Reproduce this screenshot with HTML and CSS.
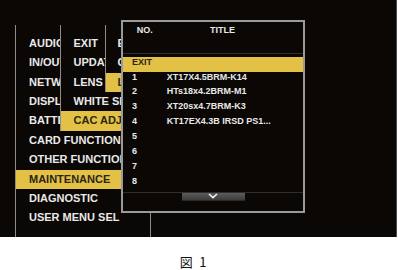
FILE: index.html
```html
<!DOCTYPE html>
<html lang="ja">
<head>
<meta charset="utf-8">
<title>MAINTENANCE - CAC ADJ - LOAD</title>
<link rel="stylesheet" href="styles.css">
</head>
<body>
<div class="figure">
  <div class="screen">
    <ul class="menu menu-main">
      <li>AUDIO</li>
      <li>IN/OUT</li>
      <li>NETWORK</li>
      <li>DISPLAY</li>
      <li>BATTERY</li>
      <li>CARD FUNCTIONS</li>
      <li>OTHER FUNCTIONS</li>
      <li class="sel">MAINTENANCE</li>
      <li>DIAGNOSTIC</li>
      <li>USER MENU SEL</li>
    </ul>
    <ul class="menu menu-sub">
      <li>EXIT</li>
      <li>UPDATE</li>
      <li>LENS FILE</li>
      <li>WHITE SHADING</li>
      <li class="sel">CAC ADJ</li>
    </ul>
    <ul class="menu menu-sub2">
      <li>EXIT</li>
      <li>CAC FILE</li>
      <li class="sel">LOAD</li>
    </ul>
    <div class="popup">
      <div class="popup-head">
        <span class="head-no">NO.</span>
        <span class="head-title">TITLE</span>
      </div>
      <ul class="list">
        <li class="sel"><span class="no">EXIT</span></li>
        <li><span class="no">1</span><span class="title">XT17X4.5BRM-K14</span></li>
        <li><span class="no">2</span><span class="title">HTs18x4.2BRM-M1</span></li>
        <li><span class="no">3</span><span class="title">XT20sx4.7BRM-K3</span></li>
        <li><span class="no">4</span><span class="title">KT17EX4.3B IRSD PS1...</span></li>
        <li><span class="no">5</span></li>
        <li><span class="no">6</span></li>
        <li><span class="no">7</span></li>
        <li><span class="no">8</span></li>
      </ul>
      <div class="popup-foot">
        <div class="scroll-btn">
          <svg width="10" height="6" viewBox="0 0 10 6"><polyline points="1,1 5,4.6 9,1" fill="none" stroke="#f2f2f2" stroke-width="1.6"/></svg>
        </div>
      </div>
    </div>
  </div>
  <p class="caption">図&ensp;1</p>
</div>
</body>
</html>
```
FILE: styles.css
```css
* { box-sizing: border-box; }
html, body { margin: 0; padding: 0; background: #ffffff; }
body { width: 398px; height: 270px; overflow: hidden; }

.figure { display: flex; flex-direction: column; }

.screen {
  position: relative;
  width: 397px;
  height: 237px;
  background: #0a0705;
  border-right: 1px solid #4a4a4a;
  overflow: hidden;
  font-family: "Liberation Sans", Arial, sans-serif;
  font-weight: bold;
  color: #e9e9e9;
}

.menu {
  position: absolute;
  top: 25px;
  margin: 0;
  padding: 9px 0 0 0;
  list-style: none;
  background: #0a0705;
  border-left: 1px solid #8c8c8c;
  font-size: 11px;
  overflow: hidden;
}
.menu li {
  height: 19.37px;
  line-height: 19.37px;
  white-space: nowrap;
  overflow: hidden;
  text-overflow: clip;
}
.menu li.sel { background: #e3c146; color: #2a2616; }

.menu-main { left: 15px; width: 136px; height: 212px; border-right: 1px solid #8c8c8c; }
.menu-main li { padding-left: 13px; width: 105px; }

.menu-sub { left: 60px; width: 61px; height: 106px; }
.menu-sub li { padding-left: 12.5px; }

.menu-sub2 { left: 105px; width: 16px; height: 67px; }
.menu-sub2 li { padding-left: 11.5px; }

.popup {
  position: absolute;
  left: 121px;
  top: 20px;
  width: 184px;
  height: 193px;
  border: 2px solid #9a9a9a;
  background: #0a0705;
  display: flex;
  flex-direction: column;
  font-size: 9px;
  line-height: 11px;
}
.popup-head {
  height: 32px;
  padding: 3.3px 0 0 13.7px;
  border-bottom: 1px solid #2e2e2e;
  display: flex;
}
.head-no { width: 73.3px; }
.list { margin: 2.7px 0 0 0; padding: 0; list-style: none; }
.list li {
  height: 14.875px;
  padding-left: 9px;
  display: flex;
  white-space: nowrap;
}
.list .no { width: 34.7px; }
.list li.sel { background: #e3c146; color: #2a2616; }

.popup-foot {
  margin-top: 1.4px;
  border-top: 1px solid #2e2e2e;
  flex: 1;
  display: flex;
  justify-content: center;
  align-items: flex-start;
}
.scroll-btn {
  width: 63px;
  height: 8px;
  background: linear-gradient(#5c5c5c, #3c3c3c);
  border-bottom: 1px solid #2a2a2a;
  display: flex;
  justify-content: center;
  align-items: center;
}
.scroll-btn svg { display: block; }

.caption {
  margin: 16px 0 0 0;
  padding-right: 12px;
  text-align: center;
  font-family: "Noto Sans CJK JP", "Liberation Sans", sans-serif;
  font-size: 13px;
  line-height: 17px;
  color: #111111;
}
```
